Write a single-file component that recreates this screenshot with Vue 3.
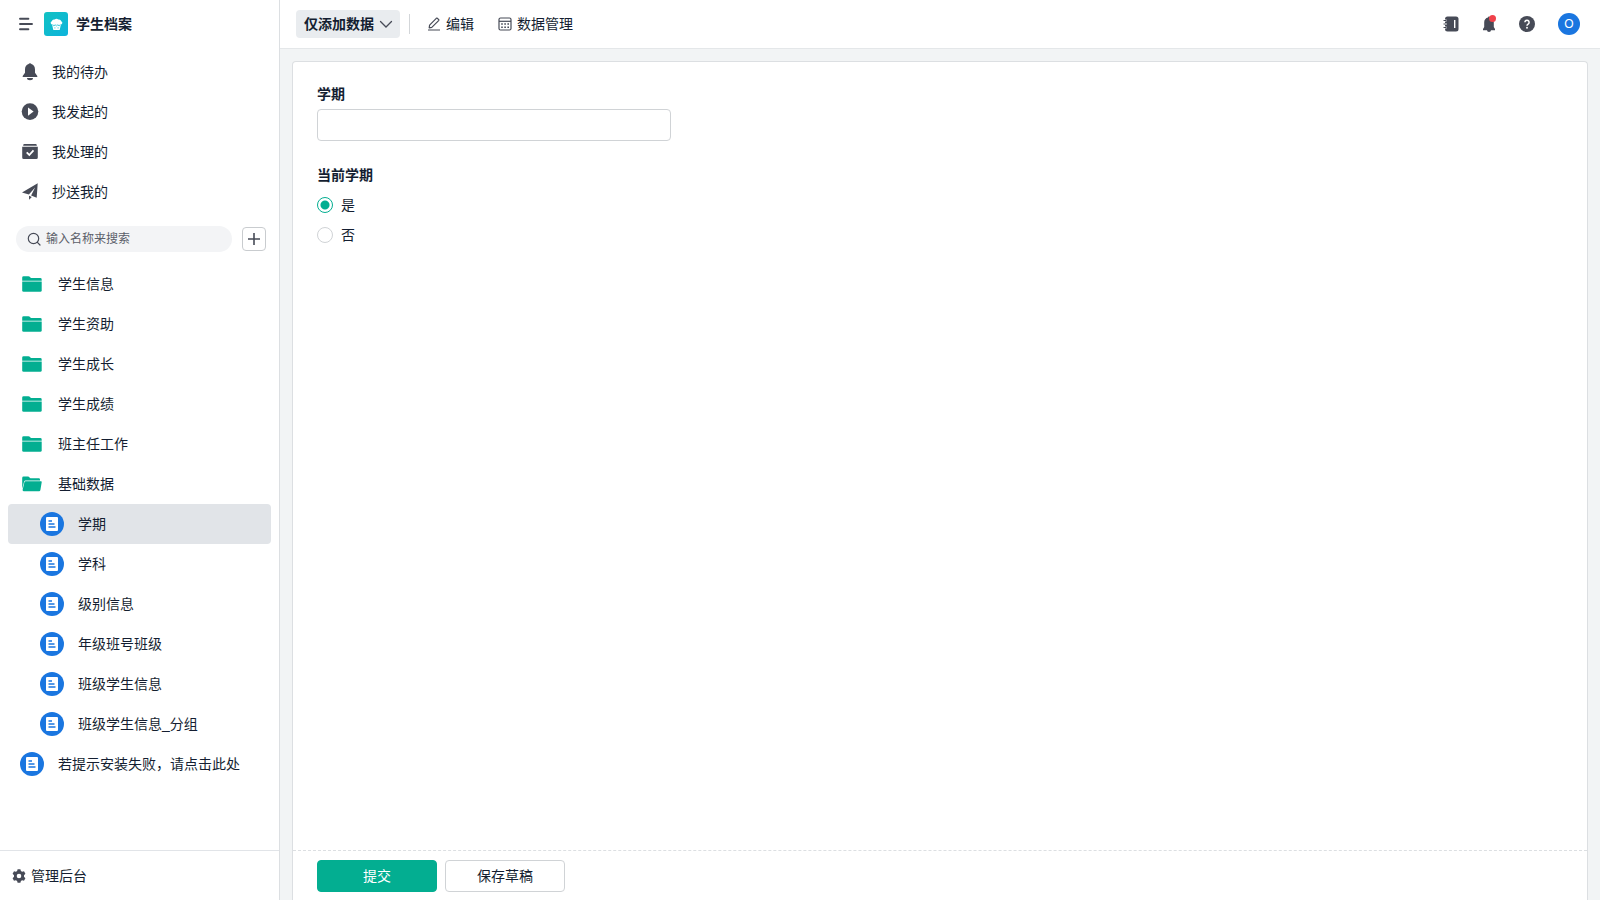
<template>
  <div class="app">
    <aside class="sidebar">
      <div class="brand">
        <button class="icon-btn" type="button" aria-label="收起">
          <svg width="16" height="16" viewBox="0 0 16 16" fill="none" stroke="currentColor" stroke-width="1.9" stroke-linecap="round"><path d="M2 2.8h8.4M2 8h12M2 13.2h8.4" /></svg>
        </button>
        <span class="brand-logo">
          <svg width="13" height="13" viewBox="0 0 14 14" fill="currentColor">
            <path d="M2.4 7.2A2 2 0 0 1 1.9 3.4 2.7 2.7 0 0 1 5 1.7a3 3 0 0 1 4 0 2.7 2.7 0 0 1 3.1 1.7 2 2 0 0 1-.5 3.8z" />
            <path d="M2.3 7h9.4l-1.1 5.3a1 1 0 0 1-1 .7H4.4a1 1 0 0 1-1-.7z" />
            <path d="M2.8 7.3l1.4 1.2 1.4-1L7 8.500l1.400-1 1.400 1 1.400-1.200M5.300 10v1.300M8.700 10v1.300" fill="none" stroke="#10bcd4" stroke-width=".8" />
          </svg>
        </span>
        <span class="brand-name">学生档案</span>
      </div>

      <nav class="menu">
        <a v-for="item in flowItems" :key="item.key" class="menu-item menu-item--flow" href="#">
          <svg v-if="item.key === 'todo'" width="20" height="20" viewBox="0 0 20 20" fill="currentColor"><path d="M8.6 2.1a1.5 1.500 0 0 1 2.800 0c2.300.7 3.600 2.700 3.600 5.300v3.400l2.300 3.200v.9H2.700V14L5 10.800V7.400c0-2.600 1.300-4.600 3.600-5.300zM7 16h6a3 2.200 0 0 1-6 0z" /></svg>
          <svg v-else-if="item.key === 'started'" width="20" height="20" viewBox="0 0 20 20"><circle cx="10" cy="9.600" r="8.300" fill="currentColor" /><path d="M8 5.500l5.600 4.100L8 13.700z" fill="#fff" /></svg>
          <svg v-else-if="item.key === 'handled'" width="20" height="20" viewBox="0 0 20 20"><path d="M4.400 2h11.200a1.200 1.200 0 0 1 1.200 1.200v.6H3.200v-.6A1.200 1.200 0 0 1 4.400 2zM2.200 4.700h15.600v10.800a1.500 1.500 0 0 1-1.500 1.500H3.700a1.500 1.500 0 0 1-1.500-1.500z" fill="currentColor" /><path d="M6.700 10.400l2.600 2.600 4.200-4.600" fill="none" stroke="#fff" stroke-width="1.800" /></svg>
          <svg v-else width="20" height="20" viewBox="0 0 20 20" fill="currentColor"><path d="M17.700 1.300l-1 14.500-5.600-2.400 4-7.800-6.200 7-6.900-2.100zM9 13.700l2.800 1.400-2.700 2.700z" /></svg>
          <span>{{ item.label }}</span>
        </a>
      </nav>

      <div class="search-row">
        <label class="search">
          <svg width="14" height="14" viewBox="0 0 14 14" fill="none" stroke="currentColor" stroke-width="1.2" stroke-linecap="round"><circle cx="6.500" cy="6.500" r="5.200" /><path d="M10.400 10.400l2.600 2.600" /></svg>
          <input v-model="keyword" type="text" placeholder="输入名称来搜索" aria-label="输入名称来搜索">
        </label>
        <button class="add-btn" type="button" aria-label="新建">
          <svg width="14" height="14" viewBox="0 0 14 14" stroke="currentColor" stroke-width="1.6"><path d="M7 1v12M1 7h12" /></svg>
        </button>
      </div>

      <nav class="menu menu--tree">
        <a
          v-for="node in visibleNodes"
          :key="node.label"
          class="menu-item"
          :class="{ 'menu-item--child': node.child, 'menu-item--active': node.child && node.label === current }"
          href="#"
          @click.prevent="select(node)"
        >
          <span v-if="node.type === 'form'" class="form-icon">
            <svg width="12" height="14" viewBox="0 0 12 14"><rect width="12" height="14" rx="1" fill="#fff" /><path d="M2.500 4h3.500M2.500 7h6M2.500 10h7" stroke="#1a76e0" stroke-width="1.500" /></svg>
          </span>
          <svg v-else-if="node.open" class="folder" width="24" height="24" viewBox="0 0 24 24" fill="currentColor"><path d="M2.200 17V6a1.400 1.400 0 0 1 1.400-1.400h4.800l2 1.600h8A1.400 1.400 0 0 1 20 7.600v.9H5.400a1.400 1.400 0 0 0-1.300.9z" /><path d="M5.600 9.200h15.300a.8.8 0 0 1 .8 1l-1.300 7.900a1.400 1.400 0 0 1-1.400 1.200H4.100A1.400 1.400 0 0 1 2.600 18l1.800-7.700a1.200 1.200 0 0 1 1.200-1.100z" /></svg>
          <svg v-else class="folder" width="24" height="24" viewBox="0 0 24 24" fill="currentColor"><path d="M2.200 8.700V5.600a1.400 1.400 0 0 1 1.400-1.400h4.800a1.500 1.500 0 0 1 1 .4L11 6.100h9.300a1.400 1.400 0 0 1 1.400 1.400v1.200z" /><path d="M2.200 9.500h19.500v8.900a1.400 1.400 0 0 1-1.400 1.400H3.600a1.400 1.400 0 0 1-1.400-1.400z" /></svg>
          <span>{{ node.label }}</span>
        </a>
      </nav>

      <a class="admin" href="#">
        <svg width="14" height="14" viewBox="0 0 14 14" fill="currentColor" fill-rule="evenodd"><path d="M5.600.2h2.800l.5 1.900 1.200.7 1.900-.6 1.400 2.500L12 6.200v1.600l1.400 1.500-1.400 2.500-1.900-.6-1.200.7-.5 1.900H5.600l-.5-1.900-1.200-.7-1.900.6L.6 9.300 2 7.800V6.200L.6 4.700 2 2.200l1.900.6 1.200-.7zM7 4.700a2.300 2.300 0 1 0 0 4.600 2.300 2.300 0 0 0 0-4.600z" /></svg>
        <span>管理后台</span>
      </a>
    </aside>

    <div class="main">
      <header class="topbar">
        <button class="mode-btn" type="button">
          <span>仅添加数据</span>
          <svg width="14" height="14" viewBox="0 0 14 14" fill="none" stroke="currentColor" stroke-width="1.3" stroke-linecap="round"><path d="M1.500 4.500L7 10l5.500-5.500" /></svg>
        </button>
        <span class="divider" />
        <button class="tool-btn" type="button">
          <svg width="14" height="14" viewBox="0 0 14 14" fill="none" stroke="currentColor" stroke-width="1.2" stroke-linejoin="round"><path d="M2.600 8.200l6.700-6.900a.8.8 0 0 1 1.100 0l1.200 1.200a.8.8 0 0 1 0 1.100l-6.800 6.800-2.600.5zM1 13h12" /></svg>
          <span>编辑</span>
        </button>
        <button class="tool-btn" type="button">
          <svg width="14" height="14" viewBox="0 0 14 14" fill="none" stroke="currentColor" stroke-width="1.2"><rect x="1" y="1" width="12" height="12" rx="1.500" /><path d="M1 4.300h12" /><path d="M3.200 7h7.800M3.200 10.200h7.800" stroke-width="1.600" stroke-dasharray="1.600 1.500" /></svg>
          <span>数据管理</span>
        </button>

        <div class="topbar-right">
          <button class="icon-btn" type="button" aria-label="通讯录">
            <svg width="16" height="16" viewBox="0 0 16 16"><rect x="2" y=".5" width="13.500" height="15" rx="2.500" fill="currentColor" /><path d="M.5 4.500h3M.5 8h3M.5 11.500h3" stroke="#fff" stroke-width="2.200" /><path d="M.5 4.500h2.800M.5 8h2.800M.5 11.500h2.800" stroke="currentColor" stroke-width="1.200" /><path d="M11.700 4v8" stroke="#fff" stroke-width="1.400" /></svg>
          </button>
          <button class="icon-btn notice" type="button" aria-label="消息">
            <svg width="16" height="16" viewBox="0 0 16 16" fill="currentColor"><path d="M7 1.400a1 1 0 0 1 2 0c2.300.5 3.800 2.300 3.800 4.800v4.900l1.200 1.900v1.300H2V13l1.200-1.900V6.200C3.200 3.700 4.700 1.900 7 1.400zM6 14.200h4a2 1.700 0 0 1-4 0z" /></svg>
            <span class="notice-dot" />
          </button>
          <button class="icon-btn" type="button" aria-label="帮助">
            <svg width="16" height="16" viewBox="0 0 16 16"><circle cx="8" cy="8" r="8" fill="currentColor" /><path d="M5.900 6.300a2.100 2.100 0 1 1 3.200 1.800C8.300 8.600 8 8.900 8 9.700" fill="none" stroke="#fff" stroke-width="1.500" /><circle cx="8" cy="11.800" r=".95" fill="#fff" /></svg>
          </button>
        </div>
        <button class="avatar" type="button">O</button>
      </header>

      <form class="panel" @submit.prevent>
        <div class="panel-body">
          <div class="field">
            <label class="field-label" for="term">学期</label>
            <input id="term" v-model="term" class="text-input" type="text">
          </div>
          <fieldset class="field">
            <legend class="field-label">当前学期</legend>
            <label v-for="opt in options" :key="opt" class="radio">
              <input v-model="isCurrent" type="radio" name="isCurrent" :value="opt">
              <span>{{ opt }}</span>
            </label>
          </fieldset>
        </div>
        <footer class="panel-foot">
          <button class="btn btn--primary" type="submit">提交</button>
          <button class="btn" type="button">保存草稿</button>
        </footer>
      </form>
    </div>
  </div>
</template>

<script setup>
import { ref, computed } from 'vue'

const flowItems = [
  { key: 'todo', label: '我的待办' },
  { key: 'started', label: '我发起的' },
  { key: 'handled', label: '我处理的' },
  { key: 'copied', label: '抄送我的' },
]

const nodes = ref([
  { type: 'folder', label: '学生信息' },
  { type: 'folder', label: '学生资助' },
  { type: 'folder', label: '学生成长' },
  { type: 'folder', label: '学生成绩' },
  { type: 'folder', label: '班主任工作' },
  { type: 'folder', label: '基础数据', open: true },
  { type: 'form', label: '学期', child: true },
  { type: 'form', label: '学科', child: true },
  { type: 'form', label: '级别信息', child: true },
  { type: 'form', label: '年级班号班级', child: true },
  { type: 'form', label: '班级学生信息', child: true },
  { type: 'form', label: '班级学生信息_分组', child: true },
  { type: 'form', label: '若提示安装失败，请点击此处' },
])

const options = ['是', '否']

const keyword = ref('')
const current = ref('学期')
const term = ref('')
const isCurrent = ref('是')

const visibleNodes = computed(() => nodes.value.filter(n => n.label.includes(keyword.value.trim())))

function select(node) {
  if (node.type === 'form') current.value = node.label
}
</script>

<style>
body {
  margin: 0;
}
</style>

<style scoped>
.app {
  display: flex;
  height: 100vh;
  overflow: hidden;
  font-family: "Liberation Sans", "Noto Sans CJK SC", sans-serif;
  font-size: 14px;
  line-height: 20px;
  color: #141e31;
  background: #fff;
}

.app * {
  box-sizing: border-box;
}

button,
input {
  font: inherit;
  color: inherit;
}

button {
  padding: 0;
  border: none;
  background: none;
  cursor: pointer;
}

a {
  color: inherit;
  text-decoration: none;
}

svg {
  display: block;
  flex: none;
}

.icon-btn {
  display: flex;
  color: #474b57;
}

/* ── Sidebar ── */
.sidebar {
  flex: none;
  display: flex;
  flex-direction: column;
  width: 280px;
  border-right: 1px solid #dcdfe2;
}

.brand {
  display: flex;
  align-items: center;
  height: 48px;
  padding: 0 18px;
}

.brand-logo {
  display: flex;
  align-items: center;
  justify-content: center;
  width: 24px;
  height: 24px;
  margin: 0 8px 0 10px;
  border-radius: 3px;
  color: #fff;
  background: linear-gradient(135deg, #12c2c2, #0db3dc);
}

.brand-name {
  font-weight: 600;
}

.menu {
  padding: 4px 8px 0;
}

.menu--tree {
  flex: 1;
  min-height: 0;
  padding-top: 12px;
  overflow: auto;
}

.menu-item {
  display: flex;
  align-items: center;
  gap: 14px;
  height: 40px;
  padding: 0 12px;
  border-radius: 4px;
  white-space: nowrap;
}

.menu-item--flow {
  gap: 12px;
}

.menu-item--flow svg {
  color: #474b57;
}

.menu-item--child {
  padding-left: 32px;
}

.menu-item:hover {
  background: #f1f3f5;
}

.menu-item--active,
.menu-item--active:hover {
  background: #e1e4e8;
}

.folder {
  color: #03ae91;
}

.form-icon {
  display: flex;
  align-items: center;
  justify-content: center;
  width: 24px;
  height: 24px;
  border-radius: 50%;
  background: #1a76e0;
}

.search-row {
  display: flex;
  align-items: center;
  gap: 10px;
  padding: 14px 13px 0 16px;
}

.search {
  flex: 1;
  display: flex;
  align-items: center;
  gap: 5px;
  height: 26px;
  padding: 0 11px;
  border-radius: 13px;
  font-size: 12px;
  color: #474b57;
  background: #f3f4f6;
}

.search input {
  flex: 1;
  min-width: 0;
  padding: 0;
  border: none;
  outline: none;
  background: none;
}

.search input::placeholder {
  color: #5b5f69;
  opacity: 1;
}

.add-btn {
  display: flex;
  align-items: center;
  justify-content: center;
  width: 24px;
  height: 24px;
  border: 1px solid #c9cccf;
  border-radius: 4px;
  color: #474b57;
}

.admin {
  display: flex;
  align-items: center;
  gap: 5px;
  height: 50px;
  padding: 0 12px;
  border-top: 1px solid #e1e4e8;
}

.admin svg {
  color: #474b57;
}

/* ── Top bar ── */
.main {
  flex: 1;
  min-width: 0;
  display: flex;
  flex-direction: column;
  background: #f2f4f5;
}

.topbar {
  flex: none;
  display: flex;
  align-items: center;
  height: 49px;
  padding: 0 20px 0 16px;
  border-bottom: 1px solid #e4e7e9;
  background: #fff;
}

.mode-btn {
  display: flex;
  align-items: center;
  gap: 5px;
  height: 28px;
  padding: 0 7px 0 8px;
  border-radius: 4px;
  font-weight: 600;
  background: #e9ecef;
}

.mode-btn svg,
.tool-btn svg {
  color: #474b57;
}

.divider {
  width: 1px;
  height: 20px;
  margin: 0 17px 0 9px;
  background: #d3d6d9;
}

.tool-btn {
  display: flex;
  align-items: center;
  gap: 5px;
  margin-right: 24px;
}

.topbar-right {
  display: flex;
  align-items: center;
  gap: 22px;
  margin: 0 23px 0 auto;
}

.notice {
  position: relative;
}

.notice-dot {
  position: absolute;
  top: -1px;
  right: 1px;
  width: 7px;
  height: 7px;
  border-radius: 50%;
  background: #f0424b;
}

.avatar {
  width: 22px;
  height: 22px;
  border-radius: 50%;
  font-size: 12px;
  color: #fff;
  background: #1a76e0;
}

/* ── Form ── */
.panel {
  flex: 1;
  min-height: 0;
  display: flex;
  flex-direction: column;
  margin: 12px 12px 0;
  border: 1px solid #dcdfe2;
  border-bottom: none;
  border-radius: 4px 4px 0 0;
  background: #fff;
}

.panel-body {
  flex: 1;
  padding: 22px 24px;
  overflow: auto;
}

.field {
  margin: 0 0 24px;
  padding: 0;
  border: none;
}

.field-label {
  display: block;
  margin-bottom: 5px;
  padding: 0;
  font-weight: 600;
}

.text-input {
  display: block;
  width: 354px;
  max-width: 100%;
  height: 32px;
  padding: 0 10px;
  border: 1px solid #d0d3d6;
  border-radius: 4px;
  outline: none;
}

.radio {
  display: flex;
  align-items: center;
  gap: 8px;
  height: 30px;
}

.radio input {
  appearance: none;
  width: 16px;
  height: 16px;
  margin: 0;
  border: 1px solid #d0d3d6;
  border-radius: 50%;
  background: #fff;
}

.radio input:checked {
  border-color: #03ae91;
  background: radial-gradient(circle, #03ae91 4px, #fff 5px);
}

.panel-foot {
  flex: none;
  display: flex;
  gap: 8px;
  height: 50px;
  padding: 9px 24px;
  border-top: 1px dashed #dcdfe2;
}

.btn {
  width: 120px;
  height: 32px;
  border: 1px solid #d0d3d6;
  border-radius: 4px;
  background: #fff;
}

.btn--primary {
  border-color: #03ae91;
  color: #fff;
  background: #03ae91;
}
</style>
